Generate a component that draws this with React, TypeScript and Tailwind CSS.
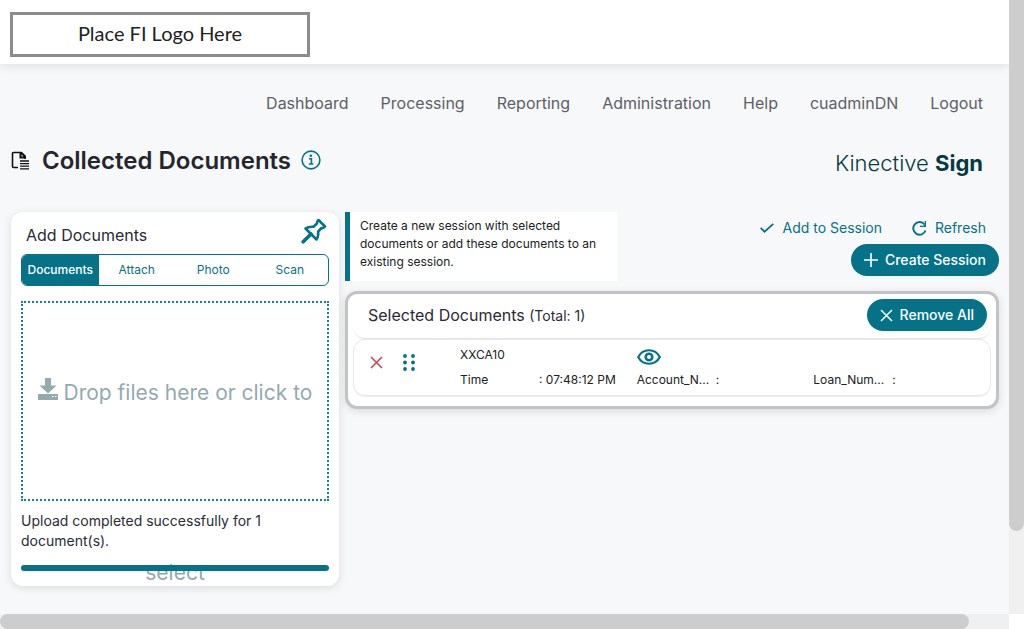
import type { ReactNode } from "react"

const navItems = ["Dashboard", "Processing", "Reporting", "Administration", "Help", "cuadminDN", "Logout"]

const tabs = ["Documents", "Attach", "Photo", "Scan"]

const fields = [
  { label: "Time", value: "07:48:12 PM" },
  { label: "Account_N...", value: "" },
  { label: "Loan_Num...", value: "" },
]

function DocumentIcon() {
  return (
    <svg width="19" height="19" viewBox="0 0 19 19" fill="none" aria-hidden="true" className="mb-[2px]">
      <path d="M7 16.500H2.500a1 1 0 0 1-1-1V2.500a1 1 0 0 1 1-1H10L14 5.500V8" stroke="#111" strokeWidth="1.600" />
      <path d="M8.500 1v6.500H15V5L11 1z" fill="#111" />
      <path d="M10.500 3.500v2h2z" fill="#f7f8fa" />
      <path d="M9 10h9M9 12.600h9M9 15.200h9M9 17.800h9" stroke="#111" strokeWidth="1.300" />
    </svg>
  )
}

function InfoIcon() {
  return (
    <svg width="20" height="20" viewBox="0 0 20 20" fill="none" aria-hidden="true">
      <circle cx="10" cy="10" r="8.900" stroke="#067287" strokeWidth="1.600" />
      <circle cx="9.800" cy="5.700" r="1.300" fill="#067287" />
      <path d="M8 8.800h2.400v5M7.800 14h4.600" stroke="#067287" strokeWidth="1.600" />
    </svg>
  )
}

function PinIcon() {
  return (
    <svg width="26" height="26" viewBox="0 0 26 26" fill="none" aria-hidden="true">
      <path
        d="M4.500 10.500C7 8.800 9.500 8.500 12.500 8.800L16 5.500C15.700 4.200 16.200 3 17.500 2L24 8.500C23 9.800 21.800 10.300 20.500 10L17.200 13.500C17.500 16.500 17.200 19 15.500 21.500Z"
        stroke="#067287"
        strokeWidth="2.600"
        strokeLinejoin="round"
      />
      <path d="M10 16L2.200 23.800" stroke="#067287" strokeWidth="3.600" strokeLinecap="round" />
    </svg>
  )
}

function DownloadIcon() {
  return (
    <svg width="20" height="22" viewBox="0 0 20 22" fill="#93aab0" aria-hidden="true" className="inline-block align-baseline">
      <path d="M7 0h6v7.500h5.500L10 15.500 1.500 7.500H7z" />
      <path d="M0 16h20v6H0z" />
      <path d="M14 18.500h1.500M17 18.500h1.500" stroke="#fff" strokeWidth="1.200" />
    </svg>
  )
}

function CheckIcon() {
  return (
    <svg width="14" height="10" viewBox="0 0 14 10" fill="none" aria-hidden="true">
      <path d="M.7 4.800L4.500 8.700 13.300.8" stroke="#067287" strokeWidth="1.800" />
    </svg>
  )
}

function RefreshIcon() {
  return (
    <svg width="15" height="15" viewBox="0 0 15 15" fill="none" aria-hidden="true">
      <path d="M12.500 3.500A6.300 6.300 0 1 0 13.500 9.500" stroke="#067287" strokeWidth="2" />
      <path d="M14 0v6H8V4.800h3.500L12.700 3.500V0z" fill="#067287" />
    </svg>
  )
}

function PlusIcon() {
  return (
    <svg width="14" height="14" viewBox="0 0 14 14" fill="none" aria-hidden="true">
      <path d="M7 0v14M0 7h14" stroke="currentColor" strokeWidth="1.600" />
    </svg>
  )
}

function CrossIcon() {
  return (
    <svg width="13" height="13" viewBox="0 0 13 13" fill="none" aria-hidden="true">
      <path d="M1 1l11 11M12 1L1 12" stroke="currentColor" strokeWidth="1.500" />
    </svg>
  )
}

function GripIcon() {
  return (
    <svg width="12" height="17" viewBox="0 0 12 17" fill="#067287" aria-hidden="true">
      {[2, 8.5, 15].map((y) => (
        <g key={y}>
          <circle cx="2" cy={y} r="1.900" />
          <circle cx="10" cy={y} r="1.900" />
        </g>
      ))}
    </svg>
  )
}

function EyeIcon() {
  return (
    <svg width="24" height="16" viewBox="0 0 24 16" fill="none" stroke="#067287" strokeWidth="2.200" aria-hidden="true">
      <path d="M1.200 8C6 -1 18 -1 22.800 8 18 17 6 17 1.200 8z" />
      <circle cx="12" cy="8" r="3.300" strokeWidth="2.600" />
    </svg>
  )
}

function PillButton({ icon, children }: { icon: ReactNode; children: ReactNode }) {
  return (
    <button type="button" className="flex h-8 items-center gap-[7px] rounded-full bg-[#067287] px-[13px] text-sm font-medium text-white">
      {icon}
      {children}
    </button>
  )
}

function AddDocuments() {
  return (
    <section className="h-[374px] overflow-hidden rounded-xl bg-white px-[10px] shadow-[0_2px_8px_rgba(0,0,0,0.12)]">
      <div className="flex h-[42px] items-center justify-between pl-[5px]">
        <h2 className="pt-1 text-base text-[#2b2b33]">Add Documents</h2>
        <button type="button" aria-label="Pin panel" className="pr-[2px] pb-1">
          <PinIcon />
        </button>
      </div>

      <div role="tablist" className="grid h-8 grid-cols-4 overflow-hidden rounded-md border border-[#067287] text-xs">
        {tabs.map((tab, index) => (
          <button
            key={tab}
            type="button"
            role="tab"
            aria-selected={index === 0}
            className={index === 0 ? "bg-[#067287] font-medium text-white" : "text-[#067287]"}
          >
            {tab}
          </button>
        ))}
      </div>

      {/* The prompt keeps the zone's line height, so its second line runs past the box */}
      <button
        type="button"
        className="mt-[15px] block h-[200px] w-full border-2 border-dotted border-[#0a869c] text-[21px] leading-[180px] text-[#93aab0]"
      >
        <span className="block h-[196px]">
          <DownloadIcon /> Drop files here or click to select
        </span>
      </button>

      <p className="mt-[10px] text-sm leading-5 text-[#2b2b33]">Upload completed successfully for 1 document(s).</p>
      <div
        role="progressbar"
        aria-label="Upload progress"
        aria-valuenow={100}
        className="relative mt-[14px] h-[6px] rounded-full bg-[#067287]"
      />
    </section>
  )
}

function SelectedDocuments() {
  return (
    <section className="mt-[10px] rounded-xl border-[3px] border-[#c3c3c3] bg-white px-[5px] pb-[10px] shadow-[0_2px_8px_rgba(0,0,0,0.12)]">
      <div className="flex h-[45px] items-center justify-between rounded-b-xl border-b border-[#e4e4e4] pr-1 pb-[2px] pl-[15px]">
        <h2 className="text-base text-[#2b2b33]">
          Selected Documents <span className="text-sm">(Total: 1)</span>
        </h2>
        <PillButton icon={<CrossIcon />}>Remove All</PillButton>
      </div>

      <div className="flex h-[57px] items-center rounded-xl border border-[#e8e8e8] text-xs text-[#212121] shadow-[0_1px_1px_rgba(0,0,0,0.08)]">
        <div className="flex w-[106px] shrink-0 items-center gap-5 pb-[10px] pl-4">
          <button type="button" aria-label="Remove document" className="text-[#dc3b45]">
            <CrossIcon />
          </button>
          <button type="button" aria-label="Reorder document">
            <GripIcon />
          </button>
        </div>
        <div className="grid flex-1 grid-cols-3 grid-rows-[25px_25px] items-center">
          <span>XXCA10</span>
          <button type="button" aria-label="View document" className="col-span-2 justify-self-start pt-1">
            <EyeIcon />
          </button>
          {fields.map((field) => (
            <div key={field.label} className="flex">
              <span className="w-[79px]">{field.label}</span>
              <span>: {field.value}</span>
            </div>
          ))}
        </div>
      </div>
    </section>
  )
}

export default function App() {
  return (
    <div className="grid h-screen grid-cols-[1fr_15px] grid-rows-[1fr_15px] bg-white font-['Inter',sans-serif]">
      <div className="min-w-0 overflow-hidden bg-[#f7f8fa]">
        <header className="flex h-16 items-center bg-white px-[10px] pt-[5px] shadow-[0_2px_10px_rgba(0,0,0,0.1)]">
          <div className="flex h-[45px] w-[300px] items-center justify-center border-[3px] border-[#8c8c8c] pb-1 font-['Lato',sans-serif] text-xl text-[#222]">
            Place FI Logo Here
          </div>
        </header>

        <nav className="flex justify-end gap-8 pt-[27px] pr-[26px] text-base text-[#5c5f66]">
          {navItems.map((item) => (
            <a key={item} href="#">
              {item}
            </a>
          ))}
        </nav>

        <div className="flex items-center justify-between pt-7 pr-[26px] pl-[11px]">
          <div className="flex items-center">
            <DocumentIcon />
            <h1 className="ml-3 text-2xl font-semibold text-[#25252e]">Collected Documents</h1>
            <button type="button" aria-label="Page information" className="ml-[10px] pb-[2px]">
              <InfoIcon />
            </button>
          </div>
          <div className="pt-1 text-[22px] leading-8 font-light text-[#033b44]">
            Kinective <span className="font-bold">Sign</span>
          </div>
        </div>

        <main className="grid grid-cols-[328px_1fr] items-start gap-[6px] pt-[33px] pr-[10px] pl-[11px]">
          <AddDocuments />
          <div>
            <div className="flex justify-between">
              <p className="h-[69px] w-[272px] border-l-[5px] border-[#067287] bg-white pt-[5px] pr-3 pl-[10px] text-xs leading-[18px] text-[#212121]">
                Create a new session with selected documents or add these documents to an existing session.
              </p>
              <div className="flex flex-col items-end text-sm text-[#067287]">
                <div className="flex h-8 gap-1">
                  <button type="button" className="flex items-center gap-2 px-[13px]">
                    <CheckIcon />
                    Add to Session
                  </button>
                  <button type="button" className="flex items-center gap-2 px-[13px]">
                    <RefreshIcon />
                    Refresh
                  </button>
                </div>
                <PillButton icon={<PlusIcon />}>Create Session</PillButton>
              </div>
            </div>
            <SelectedDocuments />
          </div>
        </main>
      </div>

      {/* Scroll bars */}
      <div className="bg-[#f0f0f0]">
        <div className="h-[86.5%] rounded-b-full bg-[#cdcdcd]" />
      </div>
      <div className="bg-[#f0f0f0]">
        <div className="h-full w-[96%] rounded-full bg-[#cdcdcd]" />
      </div>
    </div>
  )
}
